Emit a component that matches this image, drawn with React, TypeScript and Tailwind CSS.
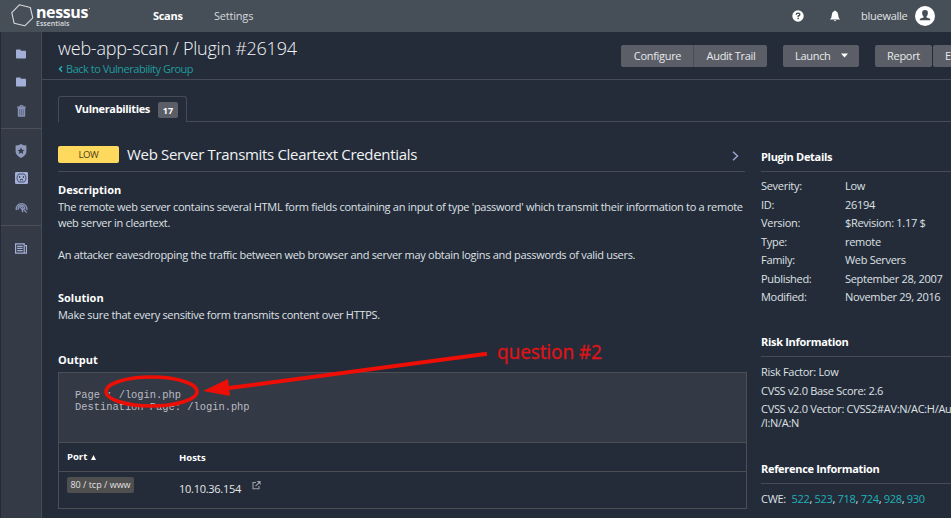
import React from "react";

type Detail = { label: string; value: string };

const details: Detail[] = [
  { label: "Severity:", value: "Low" },
  { label: "ID:", value: "26194" },
  { label: "Version:", value: "$Revision: 1.17 $" },
  { label: "Type:", value: "remote" },
  { label: "Family:", value: "Web Servers" },
  { label: "Published:", value: "September 28, 2007" },
  { label: "Modified:", value: "November 29, 2016" },
];

const cwes = ["522", "523", "718", "724", "928", "930"];

function Folder() {
  return (
    <svg width="10" height="10" viewBox="0 0 10 10" fill="#a3afd6">
      <path d="M0 1.5Q0 .6.9.6H4Q4.6.6 4.8 1.3L5 1.7H9.2Q10 1.7 10 2.5V8.8Q10 9.6 9.2 9.6H.8Q0 9.6 0 8.8Z" />
    </svg>
  );
}

function Trash() {
  return (
    <svg width="9" height="12" viewBox="0 0 9 12" fill="none">
      <path d="M3 1.8V.6H6V1.8" stroke="#8792b5" />
      <path d="M.3 1.5H8.7V2.9H.3Z" fill="#8f9abd" />
      <path d="M.8 3H8.2V11Q8.2 11.7 7.5 11.7H1.5Q.8 11.7.8 11Z" fill="#8792b5" />
      <path d="M2.7 4.2V10.4M4.5 4.2V10.4M6.3 4.2V10.4" stroke="#59617a" strokeWidth=".8" />
    </svg>
  );
}

function Shield() {
  return (
    <svg width="12" height="14" viewBox="0 0 12 14">
      <path d="M6 0Q8.5 1.5 11.4 1.6V7.5Q11.4 11.3 6 14Q.6 11.3.6 7.5V1.6Q3.5 1.5 6 0Z" fill="#8f9abd" />
      <path d="M6 3.3L7 5.7L9.6 5.9L7.6 7.5L8.3 10.1L6 8.7L3.7 10.1L4.4 7.5L2.4 5.9L5 5.7Z" fill="#353b46" />
    </svg>
  );
}

function Socket() {
  return (
    <svg width="13" height="12" viewBox="0 0 13 12" fill="none">
      <rect width="13" height="12" rx="1.2" fill="#a3afd6" />
      <path d="M3.9 2H9.1Q11 3.5 11 6T9.1 10H3.9Q2 8.5 2 6T3.9 2Z" stroke="#4a536b" strokeWidth="1" />
      <path d="M4.6 4V6M8.4 4V6M5.5 8.5V7.7Q6.5 6.8 7.5 7.7V8.5" stroke="#414a60" strokeWidth="1.1" />
    </svg>
  );
}

function Radar() {
  return (
    <svg width="13" height="13" viewBox="0 0 13 13" fill="none" stroke="#8792b5" strokeWidth="1.4">
      <path d="M1.4 9.2A5.3 5.3 0 1 1 11.7 9.2" />
      <path d="M3.5 8.9A3.3 3.3 0 1 1 9.7 8" />
      <path d="M5.5 7.5A1.3 1.3 0 1 1 7.6 7.2L11.6 11.6M6.5 6.8L7.8 11.2" />
    </svg>
  );
}

function News() {
  return (
    <svg width="12" height="11" viewBox="0 0 12 11" fill="none" stroke="#a3afd6">
      <path d="M.6.8H9.2V10.2H.6ZM10 2.7H11.5V10.2H9" strokeWidth="1.2" />
      <path d="M2.2 3.3H7.6M2.2 5.4H7.6M2.2 7.6H7.6" strokeWidth="1.3" />
    </svg>
  );
}

function Heading({ children }: { children: React.ReactNode }) {
  return <h3 className="h-4 text-[11px] leading-4 font-bold text-white">{children}</h3>;
}

function SideHeading({ children }: { children: React.ReactNode }) {
  return (
    <h3 className="h-[23px] border-b border-[#464b55] text-[11px] leading-4 font-bold text-white">
      {children}
    </h3>
  );
}

function TopBar() {
  return (
    <header className="flex h-8 shrink-0 items-center bg-[#464e57]">
      <div className="flex w-[153px] shrink-0 items-start pl-[11px]">
        <svg width="23" height="23" viewBox="0 0 23 23" fill="none" stroke="#d6d9dc" strokeWidth="1.1" strokeLinejoin="round">
          <path d="M8.3.8L19.3 3.5L21.8 13.8L13.8 21.8L3.1 19.2L.8 8.6Z" />
        </svg>
        <div className="flex flex-col pl-[2px]">
          <span className="flex h-[16px] text-[16px] leading-[17px] font-bold tracking-[-0.4px] text-white">
            nessus
            <svg className="mt-[4px] ml-px" width="1" height="2" viewBox="0 0 1 2" fill="#b5b9be">
              <rect width="1" height="1" />
            </svg>
          </span>
          <span className="h-[8px] text-[7px] leading-[8px] font-semibold text-[#d9dcdf]">Essentials</span>
        </div>
      </div>
      <span className="w-[61px] text-[11px] font-bold tracking-[-0.3px] text-white">Scans</span>
      <span className="text-[11px] tracking-[-0.2px] text-[#d5d8db]">Settings</span>
      <div className="ml-auto flex items-center pr-[16px]">
        <svg width="12" height="12" viewBox="0 0 12 12">
          <circle cx="6" cy="6" r="5.7" fill="#fff" />
          <path d="M4.2 4.7Q4.3 3.1 6.1 3.1Q7.9 3.2 7.8 4.6Q7.7 5.5 6.2 6V7" fill="none" stroke="#464e57" strokeWidth="1.4" />
          <rect x="5.4" y="7.7" width="1.5" height="1.5" fill="#464e57" />
        </svg>
        <svg className="ml-[25px]" width="12" height="12" viewBox="0 0 12 12" fill="#fff">
          <path d="M5.2 1Q6 0 6.8 1Q9.2 1.8 9.2 5Q9.2 7.8 11.2 9.6H.8Q2.8 7.8 2.8 5Q2.8 1.8 5.2 1ZM4.7 10.2H7.3Q6 12.2 4.7 10.2Z" />
        </svg>
        <span className="ml-[20px] w-[54px] text-[11px] tracking-[-0.25px] text-[#e1e3e5]">bluewalle</span>
        <svg width="20" height="20" viewBox="0 0 20 20">
          <circle cx="10" cy="10" r="10" fill="#fff" />
          <path d="M10 4Q13.1 4 12.9 7.2Q12.7 9.5 11.5 10.5V11.5L14.5 12.5Q15.3 12.9 15.3 14.2H4.7Q4.7 12.9 5.5 12.5L8.5 11.5V10.5Q7.3 9.5 7.1 7.2Q6.9 4 10 4Z" fill="#464e57" />
        </svg>
      </div>
    </header>
  );
}

function Sidebar() {
  return (
    <nav className="flex w-[42px] shrink-0 flex-col border-r border-l border-r-[#464b55] border-l-[#242a36] bg-[#353b46]">
      <div className="flex h-[97px] flex-col items-center border-b border-[#4a4f5a] pt-[17px]">
        <Folder />
        <div className="h-[18px]" />
        <Folder />
        <div className="h-[18px]" />
        <Trash />
      </div>
      <div className="flex h-[97px] flex-col items-center border-b border-[#4a4f5a] pt-[15px]">
        <Shield />
        <div className="h-[14px]" />
        <Socket />
        <div className="h-[17px]" />
        <Radar />
      </div>
      <div className="flex justify-center pt-[17px]">
        <News />
      </div>
    </nav>
  );
}

function PageHeader() {
  return (
    <div className="flex h-12 shrink-0 items-start border-b border-[#464b55] pl-4">
      <div className="w-[563px] shrink-0">
        <h1 className="mt-[4px] text-[18px] leading-6 font-light tracking-[-0.25px] text-[#f3f4f6]">web-app-scan / Plugin #26194</h1>
        <a className="flex items-center text-[11px] leading-[18px] tracking-[-0.48px] text-[#209c9c]">
          <svg className="mr-[3px]" width="5" height="6" viewBox="0 0 5 6" fill="none" stroke="#25b8b8" strokeWidth="1.5">
            <path d="M4 .5L1.5 3L4 5.5" />
          </svg>
          Back to Vulnerability Group
        </a>
      </div>
      <div className="mt-[13px] flex h-[22px] text-[11px] leading-[21px] tracking-[-0.3px] text-[#e8e9eb]">
        <span className="w-[73px] shrink-0 rounded-l-[2px] border-r border-[#484c56] bg-[#5b5e67] pl-px text-center">Configure</span>
        <span className="w-[73px] shrink-0 rounded-r-[2px] bg-[#5b5e67] pl-px text-center">Audit Trail</span>
        <span className="ml-4 flex w-[76px] shrink-0 rounded-[2px] bg-[#5b5e67] pl-[12px]">
          Launch
          <svg className="mt-[8px] ml-[10px]" width="7" height="5" viewBox="0 0 7 5" fill="#fff">
            <path d="M0 .5H7L3.5 4.5Z" />
          </svg>
        </span>
        <span className="ml-4 w-[57px] shrink-0 rounded-[2px] bg-[#5b5e67] text-center">Report</span>
        <span className="ml-px w-[18px] shrink-0 rounded-l-[2px] bg-[#5b5e67] pl-[12px]">E</span>
      </div>
    </div>
  );
}

function TabBar() {
  return (
    <div className="mt-4 flex h-[26px] shrink-0 pl-4">
      <div className="flex w-[129px] items-center rounded-t-[3px] border border-b-0 border-[#464b55] pl-4 text-[11px] font-bold tracking-[-0.35px] text-white">
        Vulnerabilities
        <span className="mr-[8px] ml-auto h-4 w-5 rounded-[2px] bg-[#5b5e67] text-center text-[9px] leading-[17px] tracking-normal">17</span>
      </div>
      <div className="flex-1 border-b border-[#464b55]" />
    </div>
  );
}

function OutputBox() {
  return (
    <div className="mt-[4px] h-[137px] w-[689px] border border-[#4b4e55]">
      <pre className="h-[70px] border-b border-[#4b4e55] bg-[#343946] pt-[16px] pl-4 font-['Liberation_Mono',monospace] text-[10.4px] leading-[12px] text-[#b9bcc2]">
        {"Page : /login.php\nDestination Page: /login.php"}
      </pre>
      <div className="flex h-[29px] border-b border-[#4b4e55] pl-2 text-[9.5px] leading-[28px] font-bold text-white">
        <span className="flex w-[112px] items-center leading-[26px]">
          Port
          <svg className="ml-[4px]" width="5" height="5" viewBox="0 0 5 5" fill="#fff">
            <path d="M0 5H5L2.5 0Z" />
          </svg>
        </span>
        <span className="leading-[30px]">Hosts</span>
      </div>
      <div className="flex items-start pl-2">
        <span className="mt-[5px] h-4 w-[67px] rounded-[2px] bg-[#504f50] text-center text-[9px] leading-[15px] text-[#e1e1e1]">
          80 / tcp / www
        </span>
        <span className="mt-[9px] ml-[45px] w-[73px] text-[11px] leading-4 tracking-[-0.27px] text-[#e5e6e8]">10.10.36.154</span>
        <svg className="mt-[9px]" width="9" height="9" viewBox="0 0 9 9" fill="none" stroke="#9b9fa6">
          <path d="M4 1.5H1V7.8H7V5M3.5 5.2L7 1.8" strokeWidth="1.1" />
          <path d="M4.6 0H8.6V4Z" fill="#9b9fa6" stroke="none" />
        </svg>
      </div>
    </div>
  );
}

function Main() {
  return (
    <main className="w-[703px] shrink-0 pl-4">
      <div className="flex h-[50px] w-[687px] items-center border-b border-[#464b55] pt-[16px]">
        <span className="h-[17px] w-[61px] rounded-[2px] bg-[#ffd85e] text-center text-[9.5px] leading-[17px] tracking-[-0.3px] text-[#4a3e1c]">LOW</span>
        <h2 className="-mt-[2px] ml-[8px] text-[15px] leading-5 tracking-[-0.32px] text-[#f2f3f4]">Web Server Transmits Cleartext Credentials</h2>
        <svg className="mt-[3px] mr-[6px] ml-auto" width="7" height="10" viewBox="0 0 7 10" fill="none" stroke="#98a4ca" strokeWidth="1.5">
          <path d="M1 .8L5.5 5L1 9.2" />
        </svg>
      </div>
      <div className="mt-[10px]">
        <Heading>Description</Heading>
        <p className="mt-px w-[688px] text-[11px] leading-4 tracking-[-0.292px] whitespace-pre text-[#dfe1e4]">
          {"The remote web server contains several HTML form fields containing an input of type 'password' which transmit their information to a remote\nweb server in cleartext.\n\nAn attacker eavesdropping the traffic between web browser and server may obtain logins and passwords of valid users."}
        </p>
      </div>
      <div className="mt-[27px]">
        <Heading>Solution</Heading>
        <p className="mt-px text-[11px] leading-4 tracking-[-0.295px] text-[#dfe1e4]">
          Make sure that every sensitive form transmits content over HTTPS.
        </p>
      </div>
      <div className="mt-[29px]">
        <Heading>Output</Heading>
        <OutputBox />
      </div>
    </main>
  );
}

function Details() {
  return (
    <aside className="w-[206px] shrink-0 pt-[27px] pl-4 text-[11px] tracking-[-0.3px] text-[#dfe1e4]">
      <SideHeading>Plugin Details</SideHeading>
      <dl className="mt-[5px] leading-[18.5px]">
        {details.map((d) => (
          <div key={d.label} className="flex">
            <dt className="w-[84px]">{d.label}</dt>
            <dd>{d.value}</dd>
          </div>
        ))}
      </dl>
      <div className="h-[27.5px]" />
      <SideHeading>Risk Information</SideHeading>
      <div className="mt-[6px] whitespace-nowrap">
        <p className="leading-[18.5px]">Risk Factor: Low</p>
        <p className="leading-[18.5px]">CVSS v2.0 Base Score: 2.6</p>
        <p className="mt-[2px] leading-[14px]">
          CVSS v2.0 Vector: CVSS2#AV:N/AC:H/Au
          <br />
          /I:N/A:N
        </p>
      </div>
      <div className="h-[31px]" />
      <SideHeading>Reference Information</SideHeading>
      <p className="mt-[7px] leading-4">
        CWE:{" "}
        <span className="ml-[3px]">
          {cwes.map((c, i) => (
            <React.Fragment key={c}>
              <a className="text-[#20b1b8]">{c}</a>
              {i < cwes.length - 1 ? ", " : ""}
            </React.Fragment>
          ))}
        </span>
      </p>
    </aside>
  );
}

function Annotation() {
  return (
    <div className="pointer-events-none absolute inset-0">
      <svg className="absolute inset-0" width="951" height="518" viewBox="0 0 951 518" fill="none">
        <ellipse cx="151.5" cy="391.5" rx="45.5" ry="14.5" stroke="#ed0f05" strokeWidth="3.5" />
        <path d="M487 353.7L227 388.3" stroke="#ed0f05" strokeWidth="4" />
        <path d="M203 391L228 379L230 396Z" fill="#ed0f05" />
      </svg>
      <span className="absolute top-[340px] left-[497px] font-['Noto_Sans',sans-serif] text-[19px] leading-6 tracking-[-0.15px] whitespace-nowrap text-[#dd1418] [-webkit-text-stroke:0.3px_#dd1418]">
        question #2
      </span>
    </div>
  );
}

export default function App() {
  return (
    <div className="relative flex h-[518px] w-[951px] flex-col overflow-hidden bg-[#242c3a] font-['Open_Sans',sans-serif]">
      <TopBar />
      <div className="flex min-h-0 flex-1">
        <Sidebar />
        <div className="flex min-w-0 flex-1 flex-col">
          <PageHeader />
          <TabBar />
          <div className="flex">
            <Main />
            <Details />
          </div>
        </div>
      </div>
      <Annotation />
    </div>
  );
}
